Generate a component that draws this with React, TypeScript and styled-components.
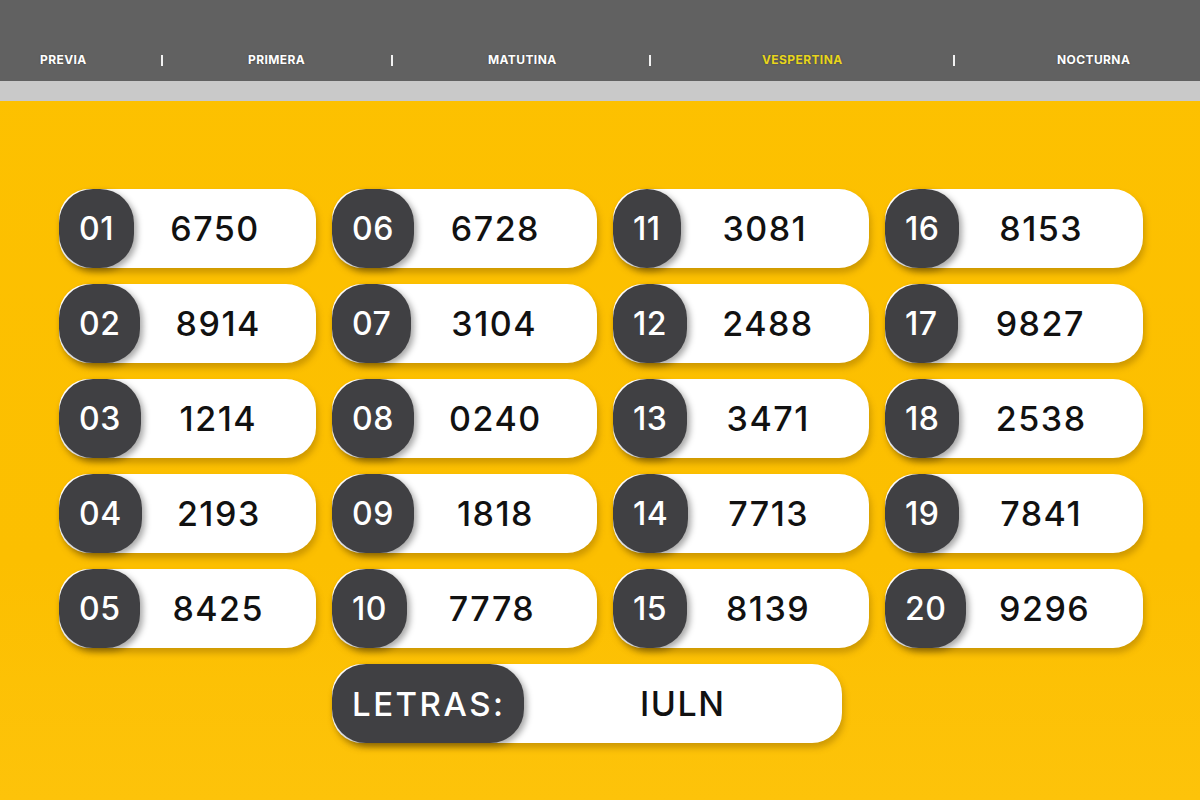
import React from "react";
import styled, { createGlobalStyle } from "styled-components";

const Global = createGlobalStyle`
  html, body { margin: 0; padding: 0; }
  body {
    width: 1200px;
    height: 800px;
    overflow: hidden;
    background: #fdc000;
    font-family: Inter, "Liberation Sans", sans-serif;
  }
`;

const Page = styled.div`
  width: 1200px;
  height: 800px;
  display: flex;
  flex-direction: column;
  background: linear-gradient(180deg, #fdc100 0%, #fcbf00 70%, #fdc30a 100%);
`;

const Header = styled.header`
  height: 81px;
  background: #616161;
  display: grid;
  grid-template-columns: 121px 87px 143px 97px 161px 113px 191px 104px auto;
  align-items: center;
  padding: 39px 0 0 40px;
  box-sizing: border-box;
`;

const NavItem = styled.span<{ $active?: boolean }>`
  font-size: 12px;
  font-weight: 700;
  letter-spacing: 0.4px;
  color: ${(p) => (p.$active ? "#e8d51c" : "#ffffff")};
  text-shadow: 0 0 2px rgba(0, 0, 0, 0.35);
  line-height: 1;
`;

const Sep = styled.span`
  display: block;
  width: 2px;
  height: 11px;
  background: #f2f2f2;
`;

const Band = styled.div`
  height: 20px;
  background: #c9c9c9;
`;

const Main = styled.main`
  padding: 88px 0 0 59px;
  display: flex;
  flex-direction: column;
  gap: 16px;
`;

const Grid = styled.div`
  display: grid;
  grid-template-columns: 257px 265px 256px 258px;
  grid-template-rows: repeat(5, 79px);
  grid-auto-flow: column;
  column-gap: 16px;
  row-gap: 16px;
`;

const Pill = styled.div`
  display: flex;
  align-items: stretch;
  height: 79px;
  background: #ffffff;
  border-radius: 30px;
  box-shadow: 2px 5px 6px rgba(120, 80, 0, 0.35);
`;

const Badge = styled.div`
  display: flex;
  align-items: center;
  justify-content: center;
  padding: 0 20px;
  background: #404043;
  border-radius: 34px;
  color: #ffffff;
  font-size: 32px;
  font-weight: 500;
  letter-spacing: 0.5px;
  box-shadow: 3px 3px 6px rgba(0, 0, 0, 0.35);
`;

const Value = styled.div<{ $pad?: number }>`
  flex: 1;
  display: flex;
  align-items: center;
  justify-content: center;
  padding-right: ${(p) => p.$pad ?? 20}px;
  font-size: 34px;
  font-weight: 500;
  letter-spacing: 1.5px;
  color: #111111;
`;

const LettersRow = styled.div`
  margin-left: 273px;
  width: 510px;
  display: flex;
`;

const LettersPill = styled(Pill)`
  width: 510px;
`;

const LettersBadge = styled(Badge)`
  font-size: 33px;
  letter-spacing: 2.5px;
  padding: 0 18px 0 20px;
`;

const navItems = ["PREVIA", "PRIMERA", "MATUTINA", "VESPERTINA", "NOCTURNA"];

const values = [
  "6750", "8914", "1214", "2193", "8425",
  "6728", "3104", "0240", "1818", "7778",
  "3081", "2488", "3471", "7713", "8139",
  "8153", "9827", "2538", "7841", "9296",
];

export default function App() {
  return (
    <>
      <Global />
      <Page>
        <Header>
          {navItems.map((n, i) => (
            <React.Fragment key={n}>
              <NavItem $active={n === "VESPERTINA"}>{n}</NavItem>
              {i < navItems.length - 1 && <Sep />}
            </React.Fragment>
          ))}
        </Header>
        <Band />
        <Main>
          <Grid>
            {values.map((v, i) => (
              <Pill key={i}>
                <Badge>{String(i + 1).padStart(2, "0")}</Badge>
                <Value>{v}</Value>
              </Pill>
            ))}
          </Grid>
          <LettersRow>
            <LettersPill>
              <LettersBadge>LETRAS:</LettersBadge>
              <Value $pad={0}>IULN</Value>
            </LettersPill>
          </LettersRow>
        </Main>
      </Page>
    </>
  );
}
